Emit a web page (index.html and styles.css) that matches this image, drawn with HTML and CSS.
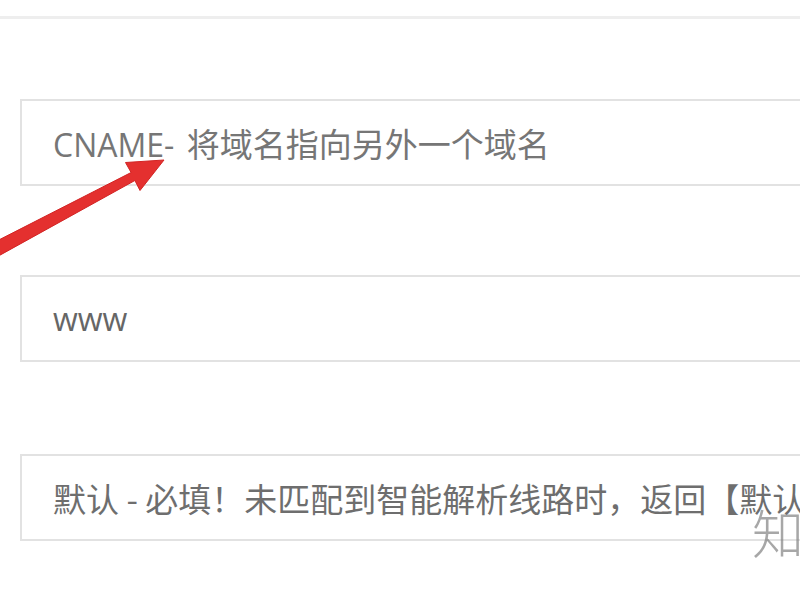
FILE: index.html
```html
<!DOCTYPE html>
<html lang="zh-CN">
<head>
<meta charset="utf-8">
<title>CNAME</title>
<link rel="stylesheet" href="styles.css">
</head>
<body>
<div class="page">
  <div class="rule"></div>
  <div class="form">
    <div class="field field-type"><span class="value">CNAME- <span class="cjk">将域名指向另外一个域名</span></span></div>
    <div class="field field-host"><span class="value value-dark">www</span></div>
    <div class="field field-line"><span class="value">默认 - 必填！未匹配到智能解析线路时，返回【默认】线路设置结果</span></div>
  </div>
  <svg class="arrow" width="200" height="140" viewBox="0 0 200 140" aria-hidden="true">
    <polygon points="164,20 140,50.5 134.9,40.5 -7,119 -13,106 131.1,32.5 125.5,22.5" fill="#e4302f" stroke="#d22424" stroke-width="1" stroke-linejoin="round"/>
  </svg>
  <div class="watermark">知</div>
</div>
</body>
</html>
```

FILE: styles.css
```css
html, body {
  margin: 0;
  padding: 0;
  background: #ffffff;
  overflow: hidden;
}

.page {
  position: relative;
  width: 800px;
  height: 600px;
  overflow: hidden;
  font-family: "Open Sans", "Noto Sans CJK SC", sans-serif;
}

.rule {
  margin-top: 16px;
  height: 3px;
  background: #eeeeee;
}

.form {
  display: flex;
  flex-direction: column;
  padding-left: 20px;
}

.field {
  box-sizing: border-box;
  height: 87px;
  margin-right: -40px;
  border: 2px solid #e2e2e2;
  display: flex;
  align-items: center;
  padding-left: 31px;
  white-space: nowrap;
  overflow: hidden;
}

.field-type {
  margin-top: 80px;
}

.field-host {
  margin-top: 89px;
}

.field-line {
  margin-top: 92px;
}

.value {
  font-size: 32px;
  color: #767676;
  font-weight: 400;
}

.cjk {
  font-family: "Noto Sans CJK SC", sans-serif;
  font-size: 33px;
  margin-left: 4px;
}

.value-dark {
  color: #666666;
}

.field-line .value {
  font-family: "Noto Sans CJK SC", sans-serif;
  font-size: 33px;
  color: #6e6e6e;
}

.arrow {
  position: absolute;
  left: 0;
  top: 140px;
}

.watermark {
  position: absolute;
  left: 752px;
  top: 506px;
  font-family: "Noto Sans CJK SC", sans-serif;
  font-size: 52px;
  font-weight: 300;
  color: rgba(130, 130, 130, 0.7);
  line-height: 1;
}
```
